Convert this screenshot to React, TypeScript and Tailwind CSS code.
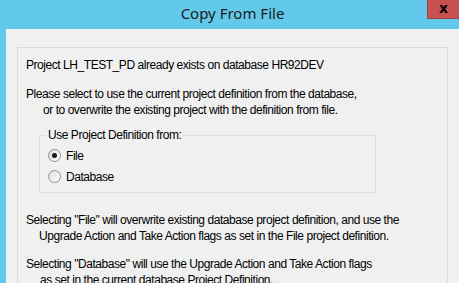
import React, { useState } from 'react';

const Radio: React.FC<{ checked: boolean; label: string; onClick: () => void }> = ({ checked, label, onClick }) => (
  <div className="flex items-center h-[21px] cursor-default" onClick={onClick}>
    <div className="w-[13px] h-[13px] rounded-full border border-[#8e8f8f] bg-gradient-to-br from-[#dcdcdc] to-white flex items-center justify-center">
      {checked && <div className="w-[5px] h-[5px] rounded-full bg-[#1a1a1a]" />}
    </div>
    <span className="ml-[5px]">{label}</span>
  </div>
);

export default function App() {
  const [source, setSource] = useState<'file' | 'db'>('file');

  return (
    <div className="w-[459px] h-[283px] bg-[#63c9eb] flex flex-col overflow-hidden">
      {/* Title bar */}
      <div className="relative h-[29px] shrink-0 flex items-center justify-center">
        <span
          className="text-[15px] text-[#1b1b1b] -mt-[3px] ml-[6px]"
          style={{ fontFamily: '"Noto Sans", "Open Sans", sans-serif' }}
        >
          Copy From File
        </span>
        <div className="absolute top-0 right-0 w-[32px] h-[19px] bg-[#c75050] border-l border-b border-[#9e4040] flex items-center justify-center">
          <span className="text-[14px] font-bold text-black leading-none -mt-[2px]" style={{ fontFamily: '"DejaVu Sans", sans-serif' }}>
            x
          </span>
        </div>
      </div>

      {/* Dialog body */}
      <div
        className="flex-1 ml-[6px] bg-[#f0f0f0] pt-[18px] pl-[11px] overflow-hidden text-[12px] text-black tracking-[-0.45px]"
        style={{ fontFamily: '"Liberation Sans", Arial, sans-serif' }}
      >
        <div className="w-[431px] h-[300px] border border-[#dadada] pt-[9px] pl-[8px] leading-[16px]">
          <div>Project LH_TEST_PD already exists on database HR92DEV</div>

          <div className="mt-[13px]">
            <div>Please select to use the current project definition from the database,</div>
            <div className="pl-[17px]">or to overwrite the existing project with the definition from file.</div>
          </div>

          <div className="relative mt-[17px] ml-[13px] w-[337px] h-[58px] border border-[#d5dfe5] rounded-[2px] pt-[9px] pl-[8px]">
            <span className="absolute -top-[9px] left-[6px] px-[2px] bg-[#f0f0f0]">Use Project Definition from:</span>
            <Radio checked={source === 'file'} label="File" onClick={() => setSource('file')} />
            <Radio checked={source === 'db'} label="Database" onClick={() => setSource('db')} />
          </div>

          <div className="mt-[19px]">
            <div>Selecting "File" will overwrite existing database project definition, and use the</div>
            <div className="pl-[13px]">Upgrade Action and Take Action flags as set in the File project definition.</div>
          </div>

          <div className="mt-[12px]">
            <div>Selecting "Database" will use the Upgrade Action and Take Action flags</div>
            <div className="pl-[14px]">as set in the current database Project Definition.</div>
          </div>
        </div>
      </div>
    </div>
  );
}
